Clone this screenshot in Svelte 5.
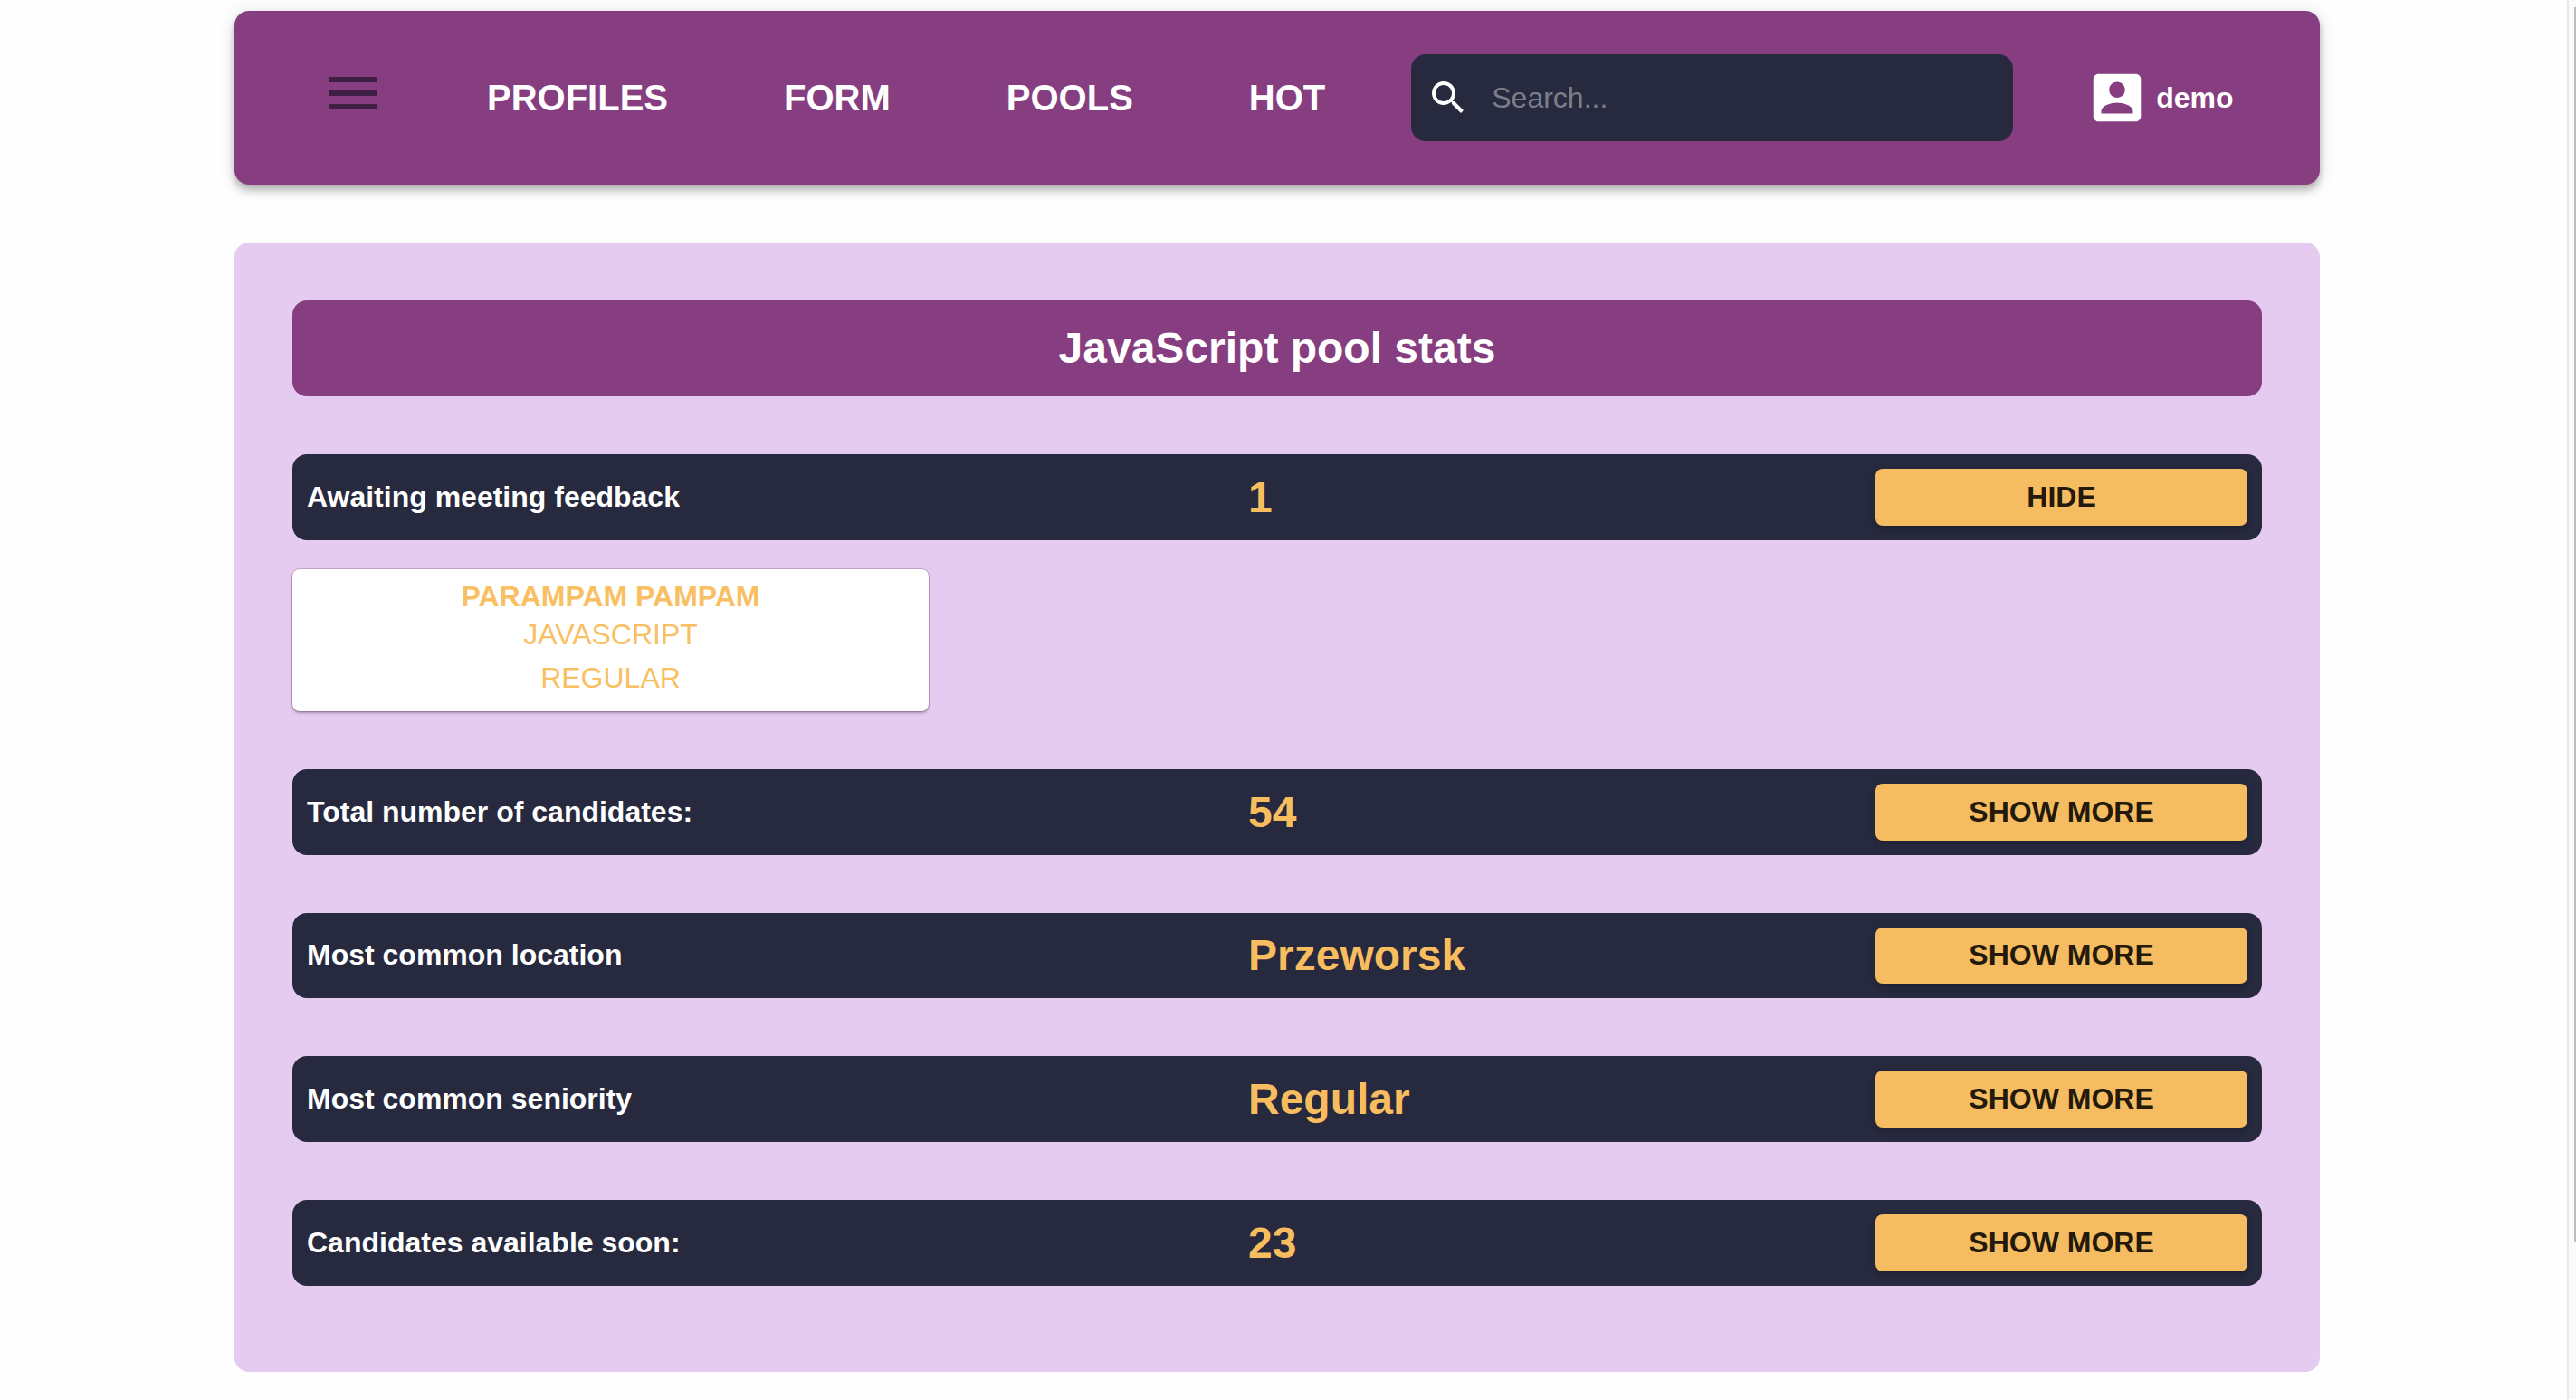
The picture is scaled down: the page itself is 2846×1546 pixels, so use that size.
<script>
  const navLinks = ['PROFILES', 'FORM', 'POOLS', 'HOT'];

  let stats = $state([
    { label: 'Awaiting meeting feedback', value: '1', open: true },
    { label: 'Total number of candidates:', value: '54', open: false },
    { label: 'Most common location', value: 'Przeworsk', open: false },
    { label: 'Most common seniority', value: 'Regular', open: false },
    { label: 'Candidates available soon:', value: '23', open: false }
  ]);
</script>

<div class="page">
  <header class="topbar">
    <button class="burger" aria-label="Menu">
      <span></span>
      <span></span>
      <span></span>
    </button>
    <nav>
      {#each navLinks as link}
        <a href="#top">{link}</a>
      {/each}
    </nav>
    <div class="search">
      <svg viewBox="0 0 24 24" width="48" height="48" fill="#fff">
        <path d="M15.5 14h-.79l-.28-.27C15.41 12.59 16 11.11 16 9.5 16 5.91 13.09 3 9.5 3S3 5.91 3 9.5 5.91 16 9.5 16c1.61 0 3.09-.59 4.23-1.57l.27.28v.79l5 4.99L20.49 19l-4.99-5zm-6 0C7.01 14 5 11.99 5 9.5S7.01 5 9.5 5 14 7.01 14 9.5 11.99 14 9.5 14z"/>
      </svg>
      <input type="text" placeholder="Search..." />
    </div>
    <div class="user">
      <svg viewBox="0 0 24 24" width="70" height="70" fill="#fff">
        <path d="M19 3H5c-1.11 0-2 .9-2 2v14c0 1.1.89 2 2 2h14c1.1 0 2-.9 2-2V5c0-1.1-.9-2-2-2zm-7 3c1.65 0 3 1.35 3 3s-1.35 3-3 3-3-1.35-3-3 1.35-3 3-3zm6 12H6v-1c0-2 4-3.1 6-3.1s6 1.1 6 3.1v1z"/>
      </svg>
      <span>demo</span>
    </div>
  </header>

  <main class="panel">
    <h1>JavaScript pool stats</h1>
    {#each stats as stat}
      <section class="group">
        <div class="row">
          <span class="label">{stat.label}</span>
          <span class="value">{stat.value}</span>
          <button class="more" onclick={() => (stat.open = !stat.open)}>
            {stat.open ? 'HIDE' : 'SHOW MORE'}
          </button>
        </div>
        {#if stat.open}
          <div class="card">
            <strong>PARAMPAM PAMPAM</strong>
            <span>JAVASCRIPT</span>
            <span class="last">REGULAR</span>
          </div>
        {/if}
      </section>
    {/each}
  </main>
</div>

<div class="scrollbar"><div class="thumb"></div></div>

<style>
  :global(body) {
    background: #fefefe;
    font-family: 'Liberation Sans', Arial, sans-serif;
    overflow: hidden;
  }

  .page {
    width: 2304px;
    margin-left: 259px;
    padding-top: 12px;
  }

  .topbar {
    display: flex;
    align-items: center;
    height: 192px;
    padding-left: 105px;
    margin-bottom: 64px;
    background: #863e80;
    border-radius: 16px;
    box-shadow: 0 4px 8px -2px rgba(0, 0, 0, 0.2), 0 8px 10px rgba(0, 0, 0, 0.14), 0 2px 20px rgba(0, 0, 0, 0.12);
  }

  .burger {
    display: flex;
    flex-direction: column;
    gap: 9px;
    width: 52px;
    margin: 0 122px 10px 0;
    padding: 0;
    background: none;
    border: none;
  }

  .burger span {
    height: 6px;
    background: #401f45;
  }

  nav {
    display: flex;
    gap: 128px;
    margin-right: 95px;
  }

  nav a {
    color: #fff;
    font-size: 40px;
    font-weight: 700;
    text-decoration: none;
  }

  .search {
    display: flex;
    align-items: center;
    gap: 24px;
    width: 665px;
    height: 96px;
    box-sizing: border-box;
    padding-left: 17px;
    margin-right: 80px;
    background: #272a3e;
    border-radius: 16px;
  }

  .search input {
    flex: 1;
    min-width: 0;
    padding: 0;
    background: none;
    border: none;
    outline: none;
    color: #fff;
    font: 32px 'Liberation Sans', Arial, sans-serif;
  }

  .search input::placeholder {
    color: #7d7e8b;
    opacity: 1;
  }

  .user {
    display: flex;
    align-items: center;
    gap: 8px;
    color: #fff;
    font-size: 32px;
    font-weight: 700;
  }

  .panel {
    display: flex;
    flex-direction: column;
    gap: 64px;
    height: 1248px;
    box-sizing: border-box;
    padding: 64px;
    background: #e5cbf0;
    border-radius: 16px;
  }

  h1 {
    margin: 0;
    height: 106px;
    line-height: 105px;
    text-align: center;
    color: #fff;
    font-size: 48px;
    font-weight: 700;
    background: #863e80;
    border-radius: 16px;
  }

  .group {
    display: flex;
    flex-direction: column;
    gap: 32px;
  }

  .row {
    display: grid;
    grid-template-columns: 1040px 1fr 411px;
    align-items: center;
    padding: 16px;
    background: #272a3e;
    border-radius: 16px;
  }

  .label {
    color: #fff;
    font-size: 32px;
    font-weight: 700;
  }

  .value {
    color: #f7bd5f;
    font-size: 48px;
    font-weight: 700;
  }

  .more {
    height: 62.75px;
    padding: 0;
    border: none;
    border-radius: 8px;
    background: #f5bc61;
    color: #231a0b;
    font: 700 32px 'Liberation Sans', Arial, sans-serif;
    box-shadow: 0 3px 3px -2px rgba(0, 0, 0, 0.12), 0 4px 6px rgba(0, 0, 0, 0.1), 0 2px 10px rgba(0, 0, 0, 0.08);
  }

  .card {
    display: flex;
    flex-direction: column;
    align-items: center;
    width: 703px;
    height: 157px;
    box-sizing: border-box;
    padding-top: 9px;
    background: #fff;
    border-radius: 8px;
    color: #f8c063;
    font-size: 32px;
    line-height: 42px;
    box-shadow: 0 0 0 1px rgba(134, 62, 128, 0.3), 0 2px 3px rgba(0, 0, 0, 0.3);
  }

  .card .last {
    margin-top: 6px;
  }

  .scrollbar {
    position: fixed;
    top: 0;
    right: 0;
    bottom: 0;
    width: 10px;
    box-sizing: border-box;
    padding: 8px 0 174px 6px;
    background: #fafafa;
    border-left: 2px solid #e8e8e8;
  }

  .thumb {
    width: 100%;
    height: 100%;
    background: #bcbcbc;
  }
</style>
